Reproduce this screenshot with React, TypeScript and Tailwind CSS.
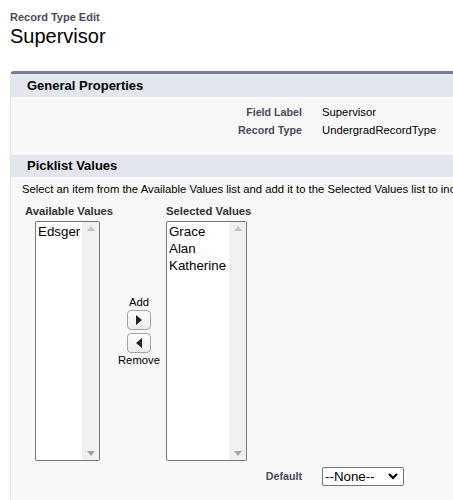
import React from "react";

function ListBox({ items, width }: { items: string[]; width: string }) {
  return (
    <div className={`flex h-[240px] ${width} border border-[#767676] rounded-[2px] bg-white`}>
      <div className="flex-1 pl-[2px] pt-[1px] text-[13.33px] leading-[17px] text-black">
        {items.map((it) => (
          <div key={it}>{it}</div>
        ))}
      </div>
      <div className="w-[17px] bg-[#f0f0f0] flex flex-col justify-between items-center py-[4px]">
        <svg width="8" height="5" viewBox="0 0 8 5"><path d="M4 0 L8 5 L0 5 Z" fill="#c1c1c1" /></svg>
        <svg width="8" height="5" viewBox="0 0 8 5"><path d="M0 0 L8 0 L4 5 Z" fill="#a3a3a3" /></svg>
      </div>
    </div>
  );
}

function ArrowButton({ dir }: { dir: "right" | "left" }) {
  return (
    <div className="w-[24px] h-[20px] rounded-[4px] border border-[#a5a5a5] bg-gradient-to-b from-white to-[#ececec] flex items-center justify-center">
      <svg width="6" height="10" viewBox="0 0 6 10">
        {dir === "right" ? <path d="M0 0 L6 5 L0 10 Z" fill="#222" /> : <path d="M6 0 L0 5 L6 10 Z" fill="#222" />}
      </svg>
    </div>
  );
}

export default function App() {
  return (
    <div className="w-[453px] h-[500px] overflow-hidden bg-white font-['Liberation_Sans',Arial,sans-serif]">
      <div className="pl-[10px] pt-[11px]">
        <div className="text-[11px] font-bold text-[#4a4a56] leading-[13px]">Record Type Edit</div>
        <div className="text-[20px] text-black leading-[24px]">Supervisor</div>
      </div>
      <div className="ml-[10px] mt-[23px] w-[640px] h-[500px] border-t-[3px] border-t-[#747e96] border-l border-l-[#e5e5e5] rounded-tl-[4px] bg-[#f8f8f8]">
        <div className="h-[23px] bg-[#e3e6ee] flex items-center pl-[16px] text-[13px] font-bold text-black">
          General Properties
        </div>
        <div className="pt-[6px] pb-[16px]">
          <div className="flex items-center h-[18px]">
            <div className="w-[291px] text-right text-[10.7px] font-bold text-[#4a4a56]">Field Label</div>
            <div className="pl-[20px] text-[11.3px] text-black">Supervisor</div>
          </div>
          <div className="flex items-center h-[18px]">
            <div className="w-[291px] text-right text-[10.7px] font-bold text-[#4a4a56]">Record Type</div>
            <div className="pl-[20px] text-[11.3px] text-black">UndergradRecordType</div>
          </div>
        </div>
        <div className="h-[22px] bg-[#e3e6ee] flex items-center pl-[16px] text-[13px] font-bold text-black">
          Picklist Values
        </div>
        <div className="pl-[11px] pt-[5px] text-[11.3px] text-black whitespace-nowrap leading-[14px]">
          Select an item from the Available Values list and add it to the Selected Values list to include it in the picklist for this record type.
        </div>
        <div className="flex pt-[8px]">
          <div className="w-[101px] shrink-0">
            <div className="pl-[14px] text-[11.3px] font-bold text-[#333] leading-[14px] whitespace-nowrap">Available Values</div>
            <div className="pl-[24px] pt-[3px]">
              <ListBox items={["Edsger"]} width="w-[65px]" />
            </div>
          </div>
          <div className="w-[54px] shrink-0 flex flex-col items-center pt-[91px] text-[11.3px] leading-[14px] text-black">
            <div>Add</div>
            <div className="pt-[1px]"><ArrowButton dir="right" /></div>
            <div className="pt-[3px]"><ArrowButton dir="left" /></div>
            <div>Remove</div>
          </div>
          <div>
            <div className="text-[11.3px] font-bold text-[#333] leading-[14px] whitespace-nowrap">Selected Values</div>
            <div className="pt-[3px]">
              <ListBox items={["Grace", "Alan", "Katherine"]} width="w-[81px]" />
            </div>
          </div>
        </div>
        <div className="flex items-center pt-[6px]">
          <div className="w-[291px] text-right text-[10.7px] font-bold text-[#4a4a56]">Default</div>
          <div className="pl-[20px]">
            <div className="w-[82px] h-[19px] border border-[#767676] rounded-[2px] bg-white flex items-center justify-between pl-[2px] pr-[5px] text-[13.33px] text-black">
              <span>--None--</span>
              <svg width="10" height="7" viewBox="0 0 10 7"><path d="M1 1 L5 5 L9 1" stroke="#000" strokeWidth="2" fill="none" /></svg>
            </div>
          </div>
        </div>
      </div>
    </div>
  );
}
